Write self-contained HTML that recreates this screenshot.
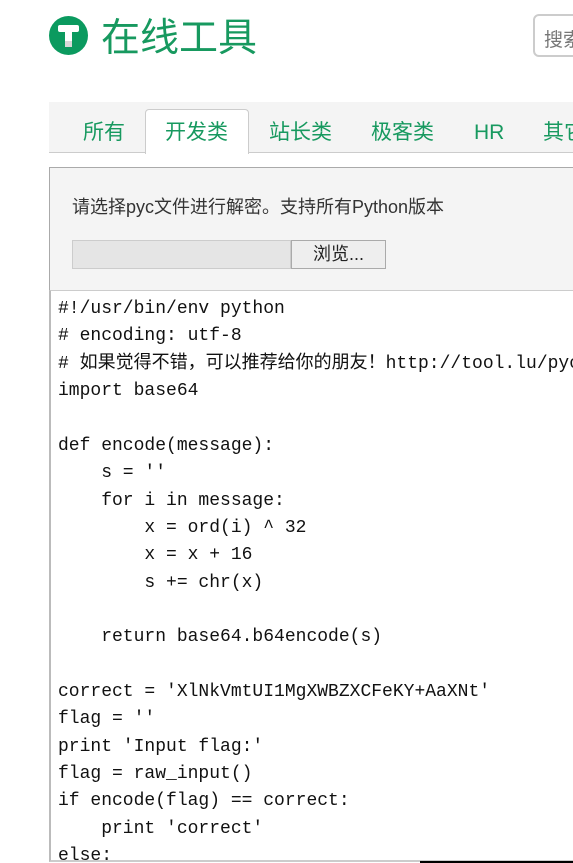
<!DOCTYPE html>
<html><head><meta charset="utf-8"><style>
*{margin:0;padding:0;box-sizing:border-box}
body{width:573px;height:863px;overflow:hidden;background:#fff;font-family:"Liberation Sans","Noto Sans CJK SC",sans-serif;position:relative}
.logo{position:absolute;left:49px;top:16px}
.title{position:absolute;left:101px;top:14px;font-size:39px;color:#17995f;line-height:50px;font-family:"Liberation Sans","Noto Sans CJK SC",sans-serif}
.search{position:absolute;left:533px;top:14px;width:60px;height:43px;border:2px solid #ccc;border-radius:6px;font-size:19px;color:#777;padding:9px 0 0 9px}
.tabbar{position:absolute;left:49px;top:102px;width:540px;height:51px;background:#f4f4f4;border-bottom:1px solid #ccc}
.tab{position:absolute;top:18px;font-size:21px;color:#17995f;line-height:26px}
.active{position:absolute;left:96px;top:7px;width:104px;height:45px;background:#fff;border:1px solid #ccc;border-bottom:none;border-radius:4px 4px 0 0}
.panel{position:absolute;left:49px;top:167px;width:540px;height:124px;background:#f4f4f4;border:1px solid #aaa;border-right:none}
.desc{position:absolute;left:22px;top:25px;font-size:18px;color:#333}
.file{position:absolute;left:22px;top:72px;width:219px;height:29px;background:#e5e5e5;border:1px solid #ccc}
.btn{position:absolute;left:241px;top:72px;width:95px;height:29px;background:#eee;border:1px solid #aaa;font-size:18px;text-align:center;line-height:27px;color:#222}
pre{position:absolute;left:49px;top:290px;width:540px;height:572px;border-left:2px solid #bbb;border-top:1px solid #ccc;border-bottom:2px solid #ccc;padding:5px 0 0 7px;font-family:"Liberation Mono","Noto Sans CJK SC",monospace;font-size:18px;line-height:27.36px;color:#111;overflow:hidden}
.bl{position:absolute;left:420px;top:861px;width:153px;height:2px;background:#000}
</style></head><body>
<svg class="logo" width="40" height="40" viewBox="0 0 40 40"><circle cx="19.5" cy="19.5" r="19.5" fill="#0b9a5f"/><rect x="9" y="9" width="21" height="7" rx="2" fill="#fff"/><rect x="16" y="15" width="7" height="16" fill="#fff"/><rect x="16" y="25" width="7" height="6" fill="#d8d8d8"/></svg>
<div class="title">在线工具</div>
<div class="search">搜索</div>
<div class="tabbar">
<div class="active"></div>
<span class="tab" style="left:34px">所有</span>
<span class="tab" style="left:116px">开发类</span>
<span class="tab" style="left:220px">站长类</span>
<span class="tab" style="left:322px">极客类</span>
<span class="tab" style="left:425px">HR</span>
<span class="tab" style="left:494px">其它</span>
</div>
<div class="panel">
<div class="desc">请选择pyc文件进行解密。支持所有Python版本</div>
<div class="file"></div><div class="btn">浏览...</div>
</div>
<pre>#!/usr/bin/env python
# encoding: utf-8
# 如果觉得不错，可以推荐给你的朋友！http://tool.lu/pyc
import base64

def encode(message):
    s = ''
    for i in message:
        x = ord(i) ^ 32
        x = x + 16
        s += chr(x)

    return base64.b64encode(s)

correct = 'XlNkVmtUI1MgXWBZXCFeKY+AaXNt'
flag = ''
print 'Input flag:'
flag = raw_input()
if encode(flag) == correct:
    print 'correct'
else:
</pre>
<div class="bl"></div>
</body></html>
